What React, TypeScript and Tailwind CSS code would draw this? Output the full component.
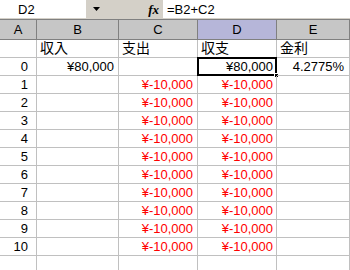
import React from "react";

const cols = [
  { key: "A", w: "w-[37px]", pr: "pr-[8px]" },
  { key: "B", w: "w-[82px]", pr: "pr-[4px]" },
  { key: "C", w: "w-[79px]", pr: "pr-[4px]" },
  { key: "D", w: "w-[79px]", pr: "pr-[3px]" },
  { key: "E", w: "w-[73px]", pr: "pr-[5px]" },
];

const rows: { a: string; b: string; c: string; d: string; e: string }[] = [
  { a: "", b: "収入", c: "支出", d: "収支", e: "金利" },
  { a: "0", b: "¥80,000", c: "", d: "¥80,000", e: "4.2775%" },
  ...Array.from({ length: 10 }, (_, i) => ({
    a: String(i + 1),
    b: "",
    c: "¥-10,000",
    d: "¥-10,000",
    e: "",
  })),
];

const font = "font-['Liberation_Sans','Noto_Sans_CJK_JP',sans-serif]";

export default function App() {
  return (
    <div className={`w-[350px] h-[270px] overflow-hidden bg-white text-[13px] text-black ${font}`}>
      {/* formula bar */}
      <div className="flex h-[20px] bg-[#d4d0c8] border-b border-[#808080]">
        <div className="w-[86px] h-[18px] bg-white flex items-center pl-[18px] leading-none">D2</div>
        <div className="w-[77px] h-[18px] flex items-center">
          <svg width="7" height="4" viewBox="0 0 7 4" className="ml-[7px]">
            <polygon points="0,0 7,0 3.5,4" fill="#000" />
          </svg>
          <span className="ml-auto mr-[4px] font-['Liberation_Serif',serif] italic font-bold text-[13px] leading-none">
            fx
          </span>
        </div>
        <div className="flex-1 h-[18px] bg-white flex items-center pl-[4px] leading-none">=B2+C2</div>
      </div>

      {/* column headers */}
      <div className="flex h-[20px]">
        {cols.map((c) => (
          <div
            key={c.key}
            className={`${c.w} h-full flex items-center justify-center border-r border-b border-[#808080] ${
              c.key === "D" ? "bg-[#b6b6d9]" : "bg-[#c6c6c6]"
            }`}
          >
            {c.key}
          </div>
        ))}
      </div>

      {/* cells */}
      {rows.map((r, ri) => {
        const vals = [r.a, r.b, r.c, r.d, r.e];
        return (
          <div key={ri} className="flex h-[18px]">
            {cols.map((c, ci) => {
              const v = vals[ci];
              const isLabel = ri === 0;
              const red = v.startsWith("¥-");
              const selected = ri === 1 && c.key === "D";
              return (
                <div
                  key={c.key}
                  className={`${c.w} relative h-full flex items-center whitespace-nowrap border-r border-b border-[#c0c0c0] ${
                    isLabel ? "justify-start pl-[3px] text-[14px]" : `justify-end ${c.pr}`
                  } ${red ? "text-[#ff0000]" : ""}`}
                >
                  {v}
                  {selected && (
                    <>
                      <div className="absolute left-[-1px] top-[-1px] right-[-1px] bottom-[-1px] border-2 border-black" />
                      <div className="absolute right-[-3px] bottom-[-3px] w-[5px] h-[5px] bg-black border border-white" />
                    </>
                  )}
                </div>
              );
            })}
          </div>
        );
      })}
      <div className="flex h-[18px]">
        {cols.map((c) => (
          <div key={c.key} className={`${c.w} h-full border-r border-[#c0c0c0]`} />
        ))}
      </div>
    </div>
  );
}
